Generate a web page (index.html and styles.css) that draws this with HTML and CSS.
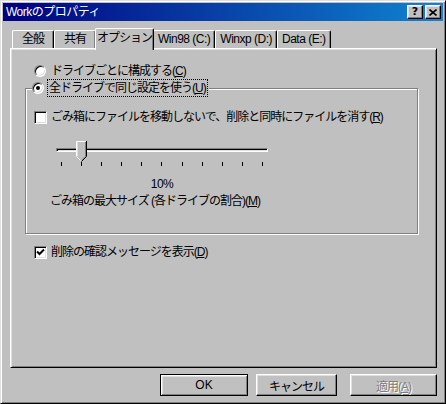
FILE: index.html
```html
<!DOCTYPE html>
<html>
<head>
  <meta charset="utf-8">
  <title>Workのプロパティ</title>
  <link rel="stylesheet" href="styles.css">
</head>
<body>
  <div class="window">
    <!-- Title bar -->
    <div class="titlebar">
      <span class="title">Workのプロパティ</span>
      <div class="title-buttons">
        <span class="tbtn help">?</span>
        <span class="tbtn close">
          <svg width="8" height="7" viewBox="0 0 8 7"><path d="M0.5 0.5 L7.5 6.5 M7.5 0.5 L0.5 6.5" stroke="#000" stroke-width="1.6" fill="none"/></svg>
        </span>
      </div>
    </div>

    <!-- Tabs -->
    <div class="tabs">
      <div class="tab">全般</div>
      <div class="tab">共有</div>
      <div class="tab active">オプション</div>
      <div class="tab latin">Win98 (C:)</div>
      <div class="tab latin">Winxp (D:)</div>
      <div class="tab latin">Data (E:)</div>
    </div>

    <!-- Options page -->
    <div class="panel">
      <div class="option first">
        <span class="radio"></span>
        <span class="option-text">ドライブごとに構成する(<u>C</u>)</span>
      </div>

      <fieldset class="group">
        <legend>
          <span class="option">
            <span class="radio checked"></span>
            <span class="option-text focused">全ドライブで同じ設定を使う(<u>U</u>)</span>
          </span>
        </legend>

        <div class="option">
          <span class="check"></span>
          <span class="option-text">ごみ箱にファイルを移動しないで、削除と同時にファイルを消す(<u>R</u>)</span>
        </div>

        <div class="slider">
          <div class="slider-track"></div>
          <svg class="slider-thumb" style="margin-left: 20px" width="11" height="21" viewBox="0 0 11 21">
            <path d="M0 0 H10 V15 L5 20 L0 15 Z" fill="#c0c0c0"/>
            <path d="M0.5 15 V0.5 H9.5" stroke="#fff" fill="none"/>
            <path d="M1.5 15 V1.5" stroke="#dfdfdf" fill="none"/>
            <path d="M10.5 0 V15.5 L5.5 20.5" stroke="#000" fill="none"/>
            <path d="M9.5 1 V15.2 L5.5 19.2" stroke="#808080" fill="none"/>
            <path d="M0.5 15.5 L4.5 19.5" stroke="#fff" fill="none"/>
          </svg>
        </div>
        <div class="ticks">
          <span></span><span></span><span></span><span></span><span></span><span></span>
          <span></span><span></span><span></span><span></span><span></span>
        </div>
        <div class="slider-value">10%</div>
        <div class="size-label">ごみ箱の最大サイズ (各ドライブの割合)(<u>M</u>)</div>
      </fieldset>

      <div class="option confirm">
        <span class="check">
          <svg width="9" height="9" viewBox="0 0 9 9"><path d="M1 3.5 L3.5 6 L8 1.5" stroke="#000" stroke-width="2" fill="none"/></svg>
        </span>
        <span class="option-text">削除の確認メッセージを表示(<u>D</u>)</span>
      </div>
    </div>

    <!-- Dialog buttons -->
    <div class="buttons">
      <button class="btn default">OK</button>
      <button class="btn cancel">キャンセル</button>
      <button class="btn apply" disabled>適用(<u>A</u>)</button>
    </div>
  </div>
</body>
</html>
```

FILE: styles.css
```css
body {
  margin: 0;
  background: #c0c0c0;
  font-family: "Liberation Sans", "Noto Sans CJK JP", sans-serif;
  font-size: 12px;
  letter-spacing: -1px;
  color: #000;
}

u {
  text-decoration: underline;
  text-underline-offset: 1px;
}

.window {
  width: 446px;
  height: 404px;
  box-sizing: border-box;
  padding: 2px;
  background: #c0c0c0;
  border: 1px solid;
  border-color: #dfdfdf #000 #000 #dfdfdf;
  box-shadow: inset 1px 1px 0 #fff, inset -1px -1px 0 #808080;
  display: flex;
  flex-direction: column;
}

/* Title bar */
.titlebar {
  height: 18px;
  display: flex;
  align-items: center;
  justify-content: space-between;
  padding: 0 2px 0 3px;
  background: linear-gradient(to right, #000080, #1084d0);
}

.title {
  color: #fff;
  line-height: 18px;
  letter-spacing: -0.5px;
}

.title-buttons {
  display: flex;
  gap: 2px;
}

.tbtn {
  width: 16px;
  height: 14px;
  box-sizing: border-box;
  background: #c0c0c0;
  border: 1px solid;
  border-color: #fff #000 #000 #fff;
  box-shadow: inset -1px -1px 0 #808080, inset 1px 1px 0 #dfdfdf;
  display: flex;
  align-items: center;
  justify-content: center;
}

.tbtn.help {
  font-family: "DejaVu Sans", sans-serif;
  font-weight: bold;
  font-size: 11px;
  line-height: 12px;
  letter-spacing: 0;
}

/* Tabs */
.tabs {
  display: flex;
  align-items: flex-end;
  height: 20px;
  margin: 7px 6px 0 9px;
}

.tab {
  height: 18px;
  min-width: 42px;
  box-sizing: border-box;
  padding: 0 4px;
  text-align: center;
  line-height: 17px;
  border: 1px solid;
  border-bottom: none;
  border-color: #fff #000 #000 #fff;
  border-radius: 2px 2px 0 0;
  box-shadow: inset -1px 0 0 #808080;
}

.tab.latin {
  letter-spacing: -0.5px;
}

.tab.active {
  position: relative;
  z-index: 1;
  height: 22px;
  margin: 0 -1px -2px -1px;
  padding: 0 1px;
  line-height: 19px;
  background: #c0c0c0;
}

.panel {
  height: 320px;
  box-sizing: border-box;
  margin: 0 6px 0 7px;
  padding: 14px 0 0 23px;
  border: 1px solid;
  border-color: #fff #000 #000 #fff;
  box-shadow: inset 1px 1px 0 #dfdfdf, inset -1px -1px 0 #808080;
}

/* Options */
.option {
  display: flex;
  align-items: center;
  height: 16px;
  line-height: 16px;
  white-space: nowrap;
}

.option-text {
  padding: 0 1px;
}

.focused {
  outline: 1px dotted #000;
  outline-offset: 0;
}

.radio {
  width: 12px;
  height: 12px;
  box-sizing: border-box;
  margin-right: 4px;
  border-radius: 50%;
  background: #fff;
  border: 1px solid;
  border-color: #808080 #fff #fff #808080;
  box-shadow: inset 1px 1px 0 #000, inset -1px -1px 0 #dfdfdf;
  display: flex;
  align-items: center;
  justify-content: center;
}

.radio.checked::after {
  content: "";
  width: 4px;
  height: 4px;
  border-radius: 50%;
  background: #000;
}

.check {
  width: 13px;
  height: 13px;
  box-sizing: border-box;
  margin-right: 3px;
  background: #fff;
  border: 1px solid;
  border-color: #808080 #fff #fff #808080;
  box-shadow: inset 1px 1px 0 #000, inset -1px -1px 0 #dfdfdf;
  display: flex;
  align-items: center;
  justify-content: center;
}

/* Group box */
.group {
  width: 393px;
  box-sizing: border-box;
  min-width: 0;
  margin: 1px 0 0 -9px;
  padding: 13px 0 24px 8px;
  border: 1px solid #808080;
  box-shadow: inset 1px 1px 0 #fff, 1px 1px 0 #fff;
}

.group legend {
  padding: 0 2px 0 0;
  margin-left: -2px;
  background: #c0c0c0;
}

/* Slider */
.slider {
  display: grid;
  width: 212px;
  height: 21px;
  margin: 16px 0 0 22px;
}

.slider > * {
  grid-area: 1 / 1;
}

.slider-track {
  align-self: start;
  margin-top: 7px;
  height: 4px;
  box-sizing: border-box;
  border: 1px solid;
  border-color: #808080 #fff #fff #808080;
  box-shadow: inset 1px 1px 0 #000, inset -1px -1px 0 #dfdfdf;
}

.slider-thumb {
  justify-self: start;
  display: block;
}

.ticks {
  display: flex;
  justify-content: space-between;
  width: 212px;
  box-sizing: border-box;
  height: 4px;
  padding: 0 5px 0 5px;
  margin-left: 22px;
}

.ticks span {
  width: 1px;
  background: #000;
}

.slider-value {
  width: 212px;
  margin: 10px 0 0 22px;
  height: 16px;
  line-height: 16px;
  text-align: center;
  letter-spacing: -0.5px;
}

.size-label {
  height: 16px;
  line-height: 16px;
  margin: 1px 0 0 16px;
  white-space: nowrap;
}

.confirm {
  margin-top: 10px;
}

/* Dialog buttons */
.buttons {
  display: flex;
  justify-content: flex-end;
  gap: 8px;
  margin: 6px 6px 0 0;
}

.btn {
  height: 22px;
  box-sizing: border-box;
  padding: 0;
  font: inherit;
  letter-spacing: inherit;
  background: #c0c0c0;
  color: #000;
  border: 1px solid;
  border-color: #fff #000 #000 #fff;
  box-shadow: inset -1px -1px 0 #808080, inset 1px 1px 0 #dfdfdf;
}

.btn.default {
  width: 88px;
  letter-spacing: 0;
  outline: 1px solid #000;
  outline-offset: -1px;
  border-color: #000;
  box-shadow: inset 1px 1px 0 #fff, inset -1px -1px 0 #808080, inset 2px 2px 0 #dfdfdf;
}

.btn.cancel {
  width: 81px;
}

.btn.apply {
  width: 87px;
  margin-left: 5px;
  color: #808080;
  text-shadow: 1px 1px 0 #fff;
}
```
